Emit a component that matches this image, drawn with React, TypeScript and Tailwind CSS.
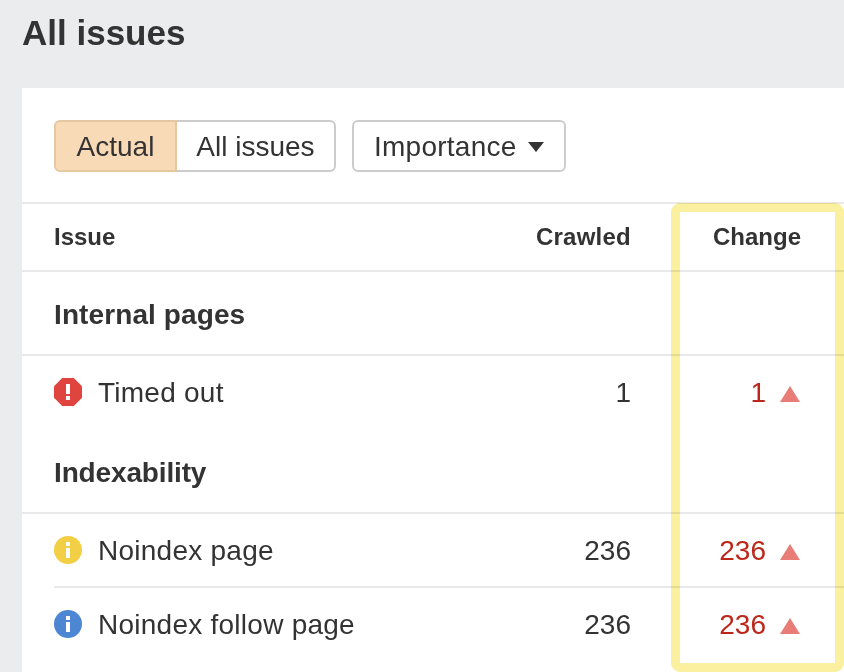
import React from "react";
import { clsx } from "clsx";

type IconKind = "error" | "warning" | "notice";

const groups: { title: string; tracking: string; rows: { icon: IconKind; name: string; crawled: number; change: number }[] }[] = [
    {
        title: "Internal pages",
        tracking: "tracking-[0.1px]",
        rows: [{ icon: "error", name: "Timed out", crawled: 1, change: 1 }],
    },
    {
        title: "Indexability",
        tracking: "tracking-[-0.15px]",
        rows: [
            { icon: "warning", name: "Noindex page", crawled: 236, change: 236 },
            { icon: "notice", name: "Noindex follow page", crawled: 236, change: 236 },
        ],
    },
];

const StatusIcon = ({ kind }: { kind: IconKind }) => {
    if (kind === "error") {
        return (
            <svg width="28" height="28" viewBox="0 0 28 28" className="shrink-0">
                <path d="M8.2 0h11.6L28 8.2v11.6L19.8 28H8.2L0 19.8V8.2z" fill="#e0443e" />
                <path d="M12 6h4v10h-4zM12 18h4v4h-4z" fill="#fff" />
            </svg>
        );
    }

    return (
        <svg width="28" height="28" viewBox="0 0 28 28" className="shrink-0">
            <circle cx="14" cy="14" r="14" fill={kind === "warning" ? "#f3cf45" : "#4d87d3"} />
            <path d="M12 6h4v4h-4zM12 12h4v10h-4z" fill="#fff" />
        </svg>
    );
};

const App = () => {
    return (
        <div className="relative h-[672px] w-[844px] overflow-hidden bg-[#ebecee] pl-[22px] font-['Liberation_Sans',Arial,sans-serif] text-[#333]">
            <h1 className="h-[88px] pt-[12px] text-[35px] leading-[42px] font-bold">All issues</h1>

            <div className="h-[584px] bg-white">
                <div className="flex h-[116px] gap-4 border-b-2 border-[#e9e9ec] pt-8 pl-8 text-[28px]">
                    <div className="flex h-[52px]">
                        <button className="w-[123px] rounded-l-md border-2 border-[#e5c7a2] bg-[#f8dab7] pt-[2px]">Actual</button>
                        <button className="w-[159px] rounded-r-md border-2 border-l-0 border-[#ccc] pt-[2px]">All issues</button>
                    </div>
                    <button className="flex h-[52px] w-[214px] items-center gap-[11px] rounded-md border-2 border-[#ccc] pl-5">
                        <span className="pt-[2px] tracking-[0.25px]">Importance</span>
                        <svg width="16" height="10" viewBox="0 0 16 10" className="mt-px">
                            <path d="M0 0h16L8 10z" fill="#333" />
                        </svg>
                    </button>
                </div>

                <div className="flex h-[68px] items-center border-b-2 border-[#e9e9ec] pl-8 text-[24px] font-bold">
                    <span className="w-[377px]">Issue</span>
                    <span className="w-[200px] text-right tracking-[0.25px]">Crawled</span>
                    <span className="w-[170px] text-right">Change</span>
                </div>

                {groups.map((group) => (
                    <div key={group.title}>
                        <h2 className={clsx("flex h-[84px] items-center border-b-2 border-[#e9e9ec] pt-1 pl-8 text-[28px] font-bold", group.tracking)}>{group.title}</h2>
                        {group.rows.map((row, i) => (
                            <div key={row.name} className="pl-8">
                                <div className={clsx("flex h-[74px] items-center border-b-2 text-[28px]", i < group.rows.length - 1 ? "border-[#e9e9ec]" : "border-transparent")}>
                                    <StatusIcon kind={row.icon} />
                                    <span className="w-[333px] pt-[2px] pl-4 tracking-[0.25px]">{row.name}</span>
                                    <span className="w-[216px] pt-[2px] text-right">{row.crawled}</span>
                                    <span className="w-[135px] pt-[2px] text-right text-[#bd271b]">{row.change}</span>
                                    <svg width="20" height="16" viewBox="0 0 20 16" className="mt-1 ml-[14px]">
                                        <path d="M10 0l10 16H0z" fill="#e87d78" />
                                    </svg>
                                </div>
                            </div>
                        ))}
                    </div>
                ))}
            </div>

            {/* marker around the Change column */}
            <div className="absolute top-[203px] left-[671px] h-[469px] w-[173px] rounded-[9px] border-[9px] border-[#faf09f] mix-blend-multiply" />
        </div>
    );
};

export default App;
